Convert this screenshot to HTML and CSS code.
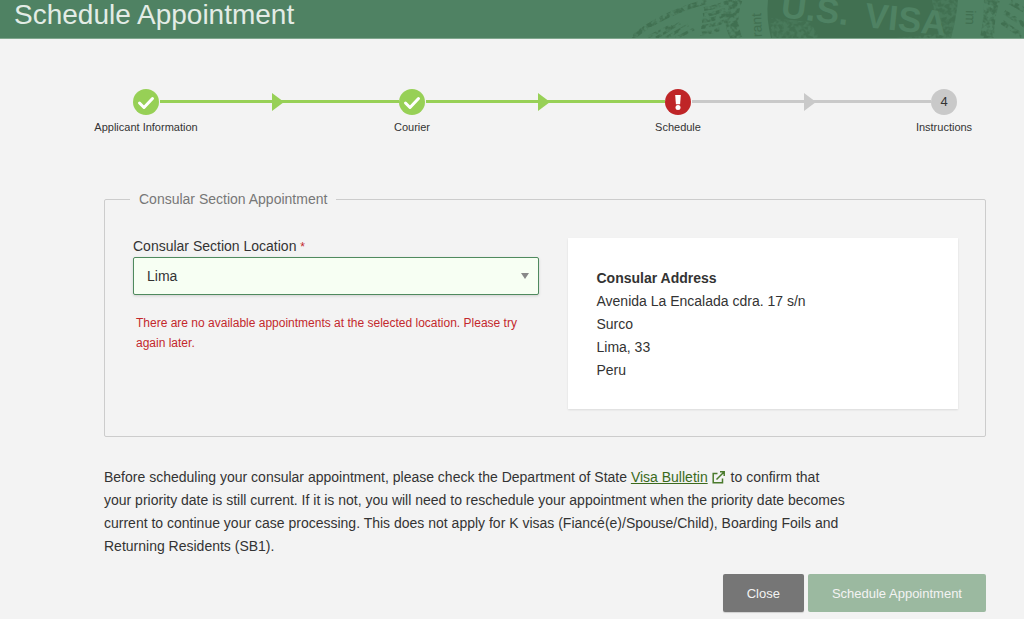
FILE: index.html
```html
<!DOCTYPE html>
<html lang="en">
<head>
<meta charset="utf-8">
<title>Schedule Appointment</title>
<link rel="stylesheet" href="styles.css">
</head>
<body>
<header class="banner">
  <h1 class="banner-title">Schedule Appointment</h1>
  <svg class="banner-seal" viewBox="0 0 404 38" aria-hidden="true">
    <defs>
      <filter id="worn" x="0" y="0" width="100%" height="100%">
        <feTurbulence type="fractalNoise" baseFrequency="0.22" numOctaves="2" seed="4" result="n"/>
        <feColorMatrix in="n" type="matrix" values="0 0 0 0 0  0 0 0 0 0  0 0 0 0 0  0 4 0 0 -1.5" result="m"/>
        <feComposite in="SourceGraphic" in2="m" operator="in"/>
      </filter>
    </defs>
    <path d="M148 0H338Q336 20 331 38H151Q146 18 148 0Z" fill="#417051"/>
    <g filter="url(#worn)" fill="#4f8263" opacity=".6">
      <path d="M150 18L190 22 200 38H152Z"/>
      <path d="M312 0H338Q336 20 331 38H276L318 34Z"/>
    </g>
    <g filter="url(#worn)" fill="none" stroke="#417051">
      <path d="M12 38Q40 14 88 1" stroke-width="5"/>
      <path d="M28 37l24-12M36 38l24-15M46 38l22-13M56 38l18-9" stroke-width="3"/>
      <path d="M84 9q14-2 26-8M83 15q14-1 28-8M82 21q12-1 24-7M81 27q12-1 24-6M80 34q10-1 20-5" stroke-width="4"/>
      <path d="M112 0q-8 20 2 38M119 0q-8 20 0 38" stroke-width="7"/>
      <path d="M368 0q0 20-4 38M376 0q-6 18-6 38" stroke-width="8"/>
      <path d="M384 12l22 14M382 22l20 14M390 2l14 8" stroke-width="5"/>
    </g>
    <g class="seal-word">
      <text x="160" y="17" transform="rotate(7 160 17)">U.S.</text>
      <text x="244" y="27" transform="rotate(6 244 27)">VISA</text>
    </g>
    <g class="seal-ring">
      <text transform="translate(142 37) rotate(-92)">rant</text>
      <text transform="translate(346 10) rotate(92)">im</text>
    </g>
  </svg>
</header>
<main class="page">
  <ol class="steps">
    <li class="step step-done">
      <svg class="step-icon" viewBox="0 0 26 26" role="img" aria-label="Completed"><circle cx="13" cy="13" r="13"/><path class="tick" d="M6.5 14l4.5 4.5 8.5-9"/></svg>
      <span class="step-label">Applicant Information</span>
    </li>
    <li class="step step-done">
      <svg class="step-icon" viewBox="0 0 26 26" role="img" aria-label="Completed"><circle cx="13" cy="13" r="13"/><path class="tick" d="M6.5 14l4.5 4.5 8.5-9"/></svg>
      <span class="step-label">Courier</span>
    </li>
    <li class="step step-error">
      <svg class="step-icon" viewBox="0 0 26 26" role="img" aria-label="Needs attention"><circle cx="13" cy="13" r="13"/><path class="bang" d="M10.2 6h5.6l-.7 9.3h-4.2z"/><circle class="bang" cx="13" cy="18.6" r="2.5"/></svg>
      <span class="step-label">Schedule</span>
    </li>
    <li class="step step-todo">
      <span class="step-icon step-number">4</span>
      <span class="step-label">Instructions</span>
    </li>
  </ol>
  <form class="form">
    <fieldset class="group">
      <legend>Consular Section Appointment</legend>
      <div class="group-columns">
        <div class="location">
          <label for="location">Consular Section Location <span class="required">*</span></label>
          <div class="select-wrap">
            <select id="location"><option>Lima</option></select>
            <svg class="select-arrow" viewBox="0 0 8 6" aria-hidden="true"><path d="M0 0h8L4 6z"/></svg>
          </div>
          <p class="error">There are no available appointments at the selected location. Please try again later.</p>
        </div>
        <address class="card">
          <strong>Consular Address</strong>
          <span>Avenida La Encalada cdra. 17 s/n</span>
          <span>Surco</span>
          <span>Lima, 33</span>
          <span>Peru</span>
        </address>
      </div>
    </fieldset>
    <p class="notice">Before scheduling your consular appointment, please check the Department of State <a href="#">Visa Bulletin</a><svg class="external" viewBox="0 0 13 13" aria-hidden="true"><path d="M5.5 2.5H1.2v9.3h9.3V7.5M4.5 8.5L12 1M8 .8h4.2V5"/></svg> to confirm that<br>your priority date is still current. If it is not, you will need to reschedule your appointment when the priority date becomes<br>current to continue your case processing. This does not apply for K visas (Fiancé(e)/Spouse/Child), Boarding Foils and<br>Returning Residents (SB1).</p>
    <div class="actions">
      <button type="button" class="button button-close">Close</button>
      <button type="submit" class="button button-submit" disabled>Schedule Appointment</button>
    </div>
  </form>
</main>
</body>
</html>
```
FILE: styles.css
```css
* { box-sizing: border-box; }
body {
  margin: 0;
  background: #f3f3f3;
  color: #333;
  font: 14px/23px "Liberation Sans", Arial, sans-serif;
}
.banner {
  display: flex;
  justify-content: space-between;
  background: #4f8263;
  border-bottom: 1px solid #7fa68d;
}
.banner-title {
  margin: 0;
  padding: 0 14px 8px;
  color: #e3ece6;
  font-size: 28px;
  font-weight: 400;
  line-height: 30px;
}
.banner-seal { width: 404px; height: 38px; flex: none; }
.seal-word {
  fill: #4f8263;
  font-size: 35px;
  font-weight: 700;
}
.seal-ring { fill: #417051; font-size: 14px; }
.page { padding: 50px 38px 6px 104px; }
.steps {
  display: flex;
  list-style: none;
  margin: 0 29px 54px;
  padding: 0;
  font-size: 11px;
  line-height: 14px;
}
.step {
  position: relative;
  display: flex;
  flex: 1;
  flex-direction: column;
  gap: 5px;
}
.step:last-child { flex: none; }
.step-icon { width: 26px; height: 26px; }
.step-label {
  display: flex;
  justify-content: center;
  width: 26px;
  white-space: nowrap;
}
.step-done { --step: #97d056; --line: #97d056; }
.step-error { --step: #bf2527; --line: #c9c9c9; }
.step-todo { --step: #c9c9c9; }
.step-icon > circle:first-child { fill: var(--step); }
.tick { fill: none; stroke: #fff; stroke-width: 3; stroke-linecap: round; stroke-linejoin: round; }
.step-icon > .bang { fill: #fff; }
.step-number {
  border-radius: 50%;
  background: var(--step);
  font-size: 13px;
  line-height: 26px;
  text-align: center;
}
.step:not(:last-child)::before {
  content: "";
  position: absolute;
  top: 11px;
  left: 27px;
  right: 0;
  height: 3px;
  background: var(--line);
}
.step:not(:last-child)::after {
  content: "";
  position: absolute;
  top: 4px;
  left: calc(50% + 6px);
  border: solid transparent;
  border-width: 9px 0 9px 12px;
  border-left-color: var(--line);
}
.group {
  min-width: 0;
  margin: 0;
  padding: 27px 27px 27px 25px;
  border: 1px solid #ccc;
  border-radius: 2px;
}
.group legend { padding: 0 9px; color: #777; }
.group-columns { display: grid; grid-template-columns: 407fr 390fr; gap: 29px; padding-left: 3px; }
.location label { display: block; padding-bottom: 3px; line-height: 16px; }
.required { color: #c3282c; font-size: 12px; line-height: 1; }
.select-wrap { position: relative; }
.select-wrap select {
  appearance: none;
  display: block;
  width: 100%;
  height: 38px;
  padding: 0 13px;
  border: 1px solid #4f8a5e;
  border-radius: 2px;
  background: #f7fff3;
  box-shadow: 0 1px 3px rgb(0 0 0 / 15%);
  color: #333;
  font: inherit;
}
.select-arrow {
  position: absolute;
  top: 16px;
  right: 10px;
  width: 8px;
  height: 6px;
  fill: #888;
  pointer-events: none;
}
.error { margin: 18px 0 0 3px; color: #c3282c; font-size: 12px; line-height: 20px; }
.card {
  display: flex;
  flex-direction: column;
  padding: 29px 28px 27px;
  background: #fff;
  box-shadow: 0 1px 2px rgb(0 0 0 / 10%);
  font-style: normal;
}
.notice { margin: 29px 0 16px; }
.notice a { color: #3b6a1c; }
.external {
  width: 13px;
  height: 13px;
  margin: 0 2px 0 4px;
  vertical-align: -2px;
  fill: none;
  stroke: #4a7a2c;
  stroke-width: 1.5;
}
.actions { display: flex; justify-content: flex-end; gap: 4px; }
.button {
  height: 38px;
  padding: 0 24px;
  border: 0;
  border-radius: 2px;
  color: #f3f3f3;
  font: inherit;
  font-size: 13px;
}
.button-close { background: #767676; box-shadow: 0 1px 1px rgb(0 0 0 / 15%); }
.button-submit { background: #9bb9a0; }
```
